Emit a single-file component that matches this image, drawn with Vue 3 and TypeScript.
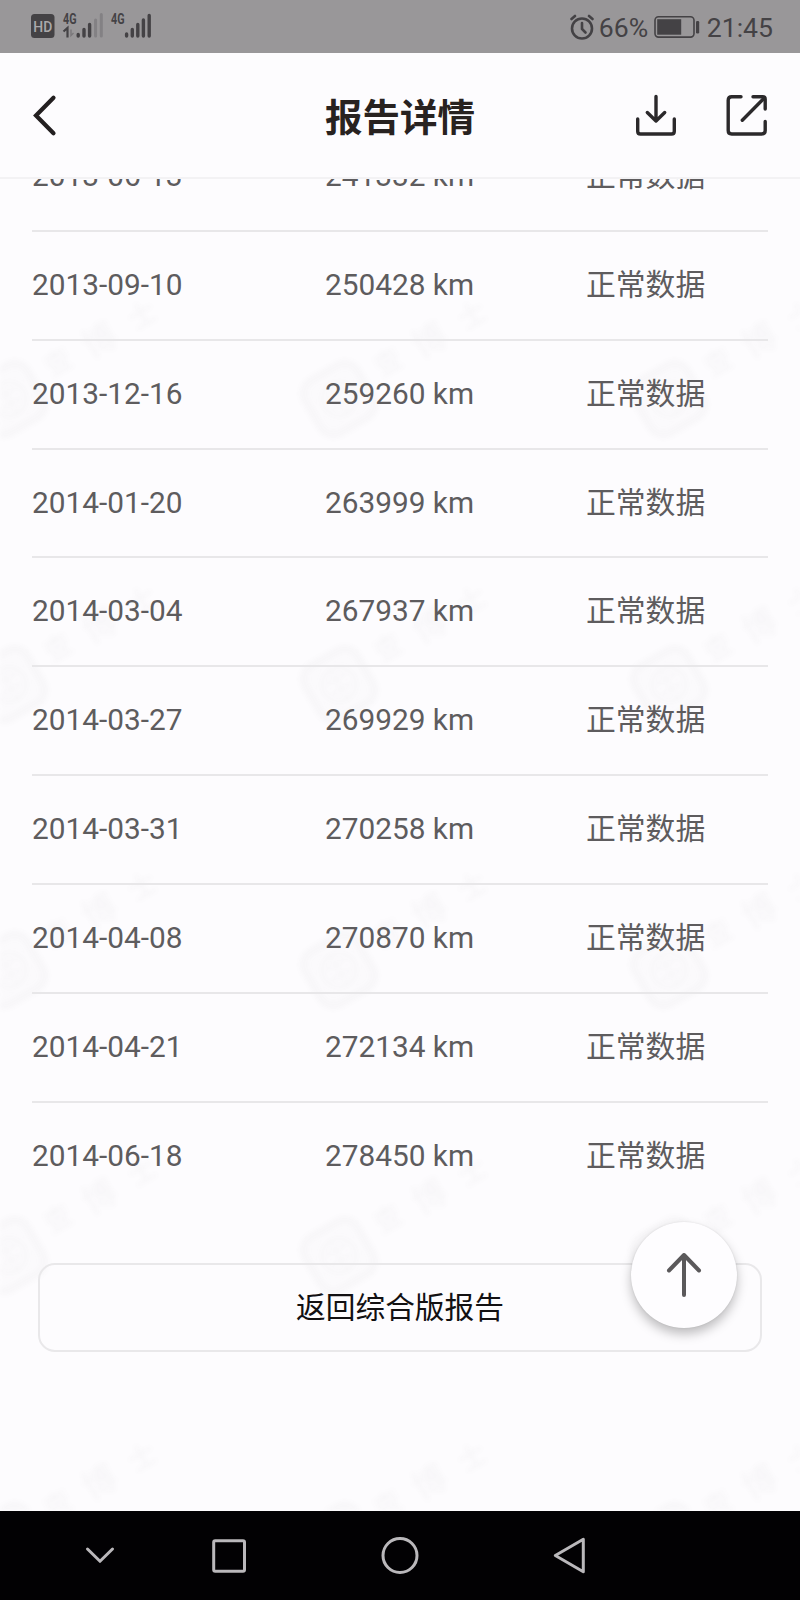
<script setup lang="ts">
interface Reading {
  date: string
  mileage: number
  status: string
}

const readings: Reading[] = [
  { date: '2013-06-13', mileage: 241332, status: '正常数据' },
  { date: '2013-09-10', mileage: 250428, status: '正常数据' },
  { date: '2013-12-16', mileage: 259260, status: '正常数据' },
  { date: '2014-01-20', mileage: 263999, status: '正常数据' },
  { date: '2014-03-04', mileage: 267937, status: '正常数据' },
  { date: '2014-03-27', mileage: 269929, status: '正常数据' },
  { date: '2014-03-31', mileage: 270258, status: '正常数据' },
  { date: '2014-04-08', mileage: 270870, status: '正常数据' },
  { date: '2014-04-21', mileage: 272134, status: '正常数据' },
  { date: '2014-06-18', mileage: 278450, status: '正常数据' },
]
</script>

<template>
  <div class="phone">
    <div class="status-bar">
      <svg class="signals" width="124" height="30" viewBox="0 0 124 30">
        <rect x="0" y="3" width="23.5" height="24" rx="3.5" fill="#444245" />
        <text x="11.8" y="20.8" class="hd" text-anchor="middle" textLength="19" lengthAdjust="spacingAndGlyphs">HD</text>
        <text x="32" y="13" class="net" textLength="13.5" lengthAdjust="spacingAndGlyphs">4G</text>
        <g stroke="#444245" stroke-width="3.4" stroke-linecap="round">
          <path d="M47.2 23.5v1.5M53 18.5V25M58.6 13.5V25" />
          <path d="M64.6 9V25M70.3 3.5V25" stroke="#838184" stroke-width="3" />
          <path d="M95.6 23v2M101.3 18.5V25M106.8 13.5V25M112.4 9V25M118.2 4.5V25" />
        </g>
        <path d="M32.5 20.5l4-3.5v9.5" fill="none" stroke="#444245" stroke-width="2.2" />
        <path d="M40 18.5v6l2.5-2.5" fill="none" stroke="#7a787b" stroke-width="1.4" />
        <text x="80" y="13" class="net" textLength="13.5" lengthAdjust="spacingAndGlyphs">4G</text>
      </svg>
      <div class="status-right">
        <svg width="25" height="28" viewBox="0 0 25 28" fill="none" stroke="#444245" stroke-linecap="round">
          <circle cx="12" cy="15.5" r="10" stroke-width="2.6" />
          <path d="M12 10v6l3.5 3.5" stroke-width="2.6" />
          <path d="M1.5 6L5 3M19 3L22.5 6" stroke-width="2.6" />
        </svg>
        <span class="percent">66%</span>
        <svg class="battery" width="46" height="24" viewBox="0 0 46 24">
          <rect x="1" y="1.7" width="39" height="20.4" rx="3.5" fill="none" stroke="#444245" stroke-width="1.6" />
          <rect x="3.2" y="4.2" width="24" height="15.5" fill="#444245" />
          <rect x="42" y="6" width="3.2" height="12.5" rx="1.2" fill="#444245" />
        </svg>
        <span class="clock">21:45</span>
      </div>
    </div>

    <header class="header">
      <svg class="back" width="28" height="44" viewBox="0 0 28 44">
        <path d="M22.5 3.7L5 21.5L22.5 39.3" fill="none" stroke="#231f20" stroke-width="4.2" stroke-linecap="round" />
      </svg>
      <h1 class="title">报告详情</h1>
      <div class="actions">
        <svg width="44" height="44" viewBox="0 0 44 44">
          <g fill="none" stroke="#2b292b" stroke-width="3.4" stroke-linecap="round" stroke-linejoin="round">
            <path d="M22 3.5V28M13.3 19.5L22 28l8.7-8.5" />
            <path d="M3.7 26v12.2q0 2.8 2.8 2.8h31q2.8 0 2.8-2.8V26" />
          </g>
        </svg>
        <svg width="44" height="44" viewBox="0 0 44 44">
          <g fill="none" stroke="#2b292b" stroke-width="3.4" stroke-linecap="round" stroke-linejoin="round">
            <path d="M16 3.7H6.7q-3.5 0-3.5 3.5v30.3q0 3.5 3.5 3.5h30q3.5 0 3.5-3.5V28.5" />
            <path d="M28 3.7h9.7q2.5 0 2.5 2.5V16" />
            <path d="M17.3 27.3L38.8 5.5" />
          </g>
        </svg>
      </div>
    </header>

    <main class="content">
      <svg class="watermark" width="800" height="1332" viewBox="0 179 800 1332">
        <defs>
          <pattern id="mark" x="-63" y="268" width="330" height="285.5" patternUnits="userSpaceOnUse">
            <g transform="rotate(-30 72 131)" fill="none" stroke="#77757a">
              <rect x="42" y="101" width="60" height="60" rx="15" stroke-width="8" fill="#77757a" fill-opacity="0.35" />
              <circle cx="72" cy="131" r="17" stroke-width="4" />
              <path d="M61 125h22M61 136h22M72 116v30" stroke-width="3" />
            </g>
            <g class="mark-text" fill="#77757a">
              <text transform="translate(114 110) rotate(-30)">查</text>
              <text class="mark-large" transform="translate(154 91) rotate(-30)">博</text>
              <text transform="translate(198 63) rotate(-30)">士</text>
            </g>
          </pattern>
        </defs>
        <rect x="0" y="179" width="800" height="1332" fill="url(#mark)" />
      </svg>

      <ul class="list">
        <li v-for="row in readings" :key="row.date" class="row">
          <span>{{ row.date }}</span>
          <span>{{ row.mileage }} km</span>
          <span>{{ row.status }}</span>
        </li>
      </ul>

      <button class="return" type="button">返回综合版报告</button>

      <button class="to-top" type="button" aria-label="返回顶部">
        <svg width="40" height="48" viewBox="0 0 40 48">
          <path d="M20 44V4M5 19.5L20 4l15 15.5" fill="none" stroke="#5b595b" stroke-width="4" stroke-linecap="round" stroke-linejoin="round" />
        </svg>
      </button>
    </main>

    <nav class="nav">
      <svg width="800" height="89" viewBox="0 0 800 89" fill="none" stroke="#bab8bb" stroke-width="3" stroke-linecap="round" stroke-linejoin="round">
        <path d="M87.5 38L100 50.3L112.5 38" />
        <rect x="213.7" y="29.7" width="30.8" height="30.6" rx="1.5" />
        <circle cx="400" cy="44.5" r="17" />
        <path d="M583.3 28.3v32.4L555.3 44.5z" />
      </svg>
    </nav>
  </div>
</template>

<style>
html,
body {
  margin: 0;
  background: #fdfcfe;
}
</style>

<style scoped>
.phone {
  width: 800px;
  height: 1600px;
  display: flex;
  flex-direction: column;
  overflow: hidden;
  background: #fdfcfe;
  font-family: Roboto, 'Noto Sans CJK SC', sans-serif;
}

.status-bar {
  flex: none;
  height: 53px;
  box-sizing: border-box;
  padding: 0 27px 0 31px;
  display: flex;
  align-items: center;
  justify-content: space-between;
  background: #999799;
  color: #444245;
}

.signals {
  margin-top: -1px;
}

.hd {
  font: 500 15px Roboto, sans-serif;
  fill: #aaa8aa;
}

.net {
  font: 700 14px Roboto, sans-serif;
  fill: #444245;
}

.status-right {
  display: flex;
  align-items: center;
  font-size: 26.6px;
  line-height: 53px;
}

.status-right > svg {
  flex: none;
}

.percent {
  margin-left: 4px;
  width: 49px;
  padding-top: 2px;
}

.battery {
  margin-left: 6px;
}

.clock {
  margin-left: 7px;
  padding-top: 2px;
}

.header {
  flex: none;
  height: 126px;
  box-sizing: border-box;
  padding: 0 31px;
  border-bottom: 2px solid #f3f2f4;
  display: grid;
  grid-template-columns: 1fr auto 1fr;
  align-items: center;
}

.back {
  margin-top: 1px;
}

.title {
  margin: 6px 0 0;
  font-size: 37.5px;
  line-height: 54px;
  font-weight: 700;
  color: #282220;
}

.actions {
  display: flex;
  justify-content: flex-end;
  gap: 47px;
}

.content {
  position: relative;
  flex: 1;
  min-height: 0;
  overflow: hidden;
}

.watermark {
  position: absolute;
  inset: 0;
  opacity: 0.035;
  filter: blur(2.8px);
}

.mark-text {
  font: 700 28px 'Noto Sans CJK SC', sans-serif;
}

.mark-large {
  font-size: 34px;
}

.list {
  position: relative;
  list-style: none;
  margin: -56.1px 32px 0;
  padding: 0;
}

.row {
  height: 108.9px;
  box-sizing: border-box;
  padding-bottom: 1px;
  display: grid;
  grid-template-columns: 293px 261px 1fr;
  align-items: center;
  border-bottom: 2px solid #e8e7e9;
  font-size: 29.8px;
  line-height: 40px;
  color: #5e5c5e;
}

.row:last-child {
  border-bottom-color: transparent;
}

.return {
  position: relative;
  display: block;
  width: 724px;
  height: 89px;
  margin: 51px auto 0;
  padding: 0 0 4px;
  border: 2px solid #e9e8ea;
  border-radius: 17px;
  background: transparent;
  font: 400 29.7px Roboto, 'Noto Sans CJK SC', sans-serif;
  color: #121012;
}

.to-top {
  position: absolute;
  right: 63px;
  bottom: 183px;
  width: 106px;
  height: 106px;
  padding: 0;
  border: 0;
  border-radius: 50%;
  background: #fefdff;
  box-shadow: 0 6px 11px rgba(0, 0, 0, 0.25), 0 0 2px rgba(0, 0, 0, 0.1);
  display: grid;
  place-items: center;
}

.nav {
  flex: none;
  height: 89px;
  background: #020103;
}

.nav svg {
  display: block;
}
</style>
